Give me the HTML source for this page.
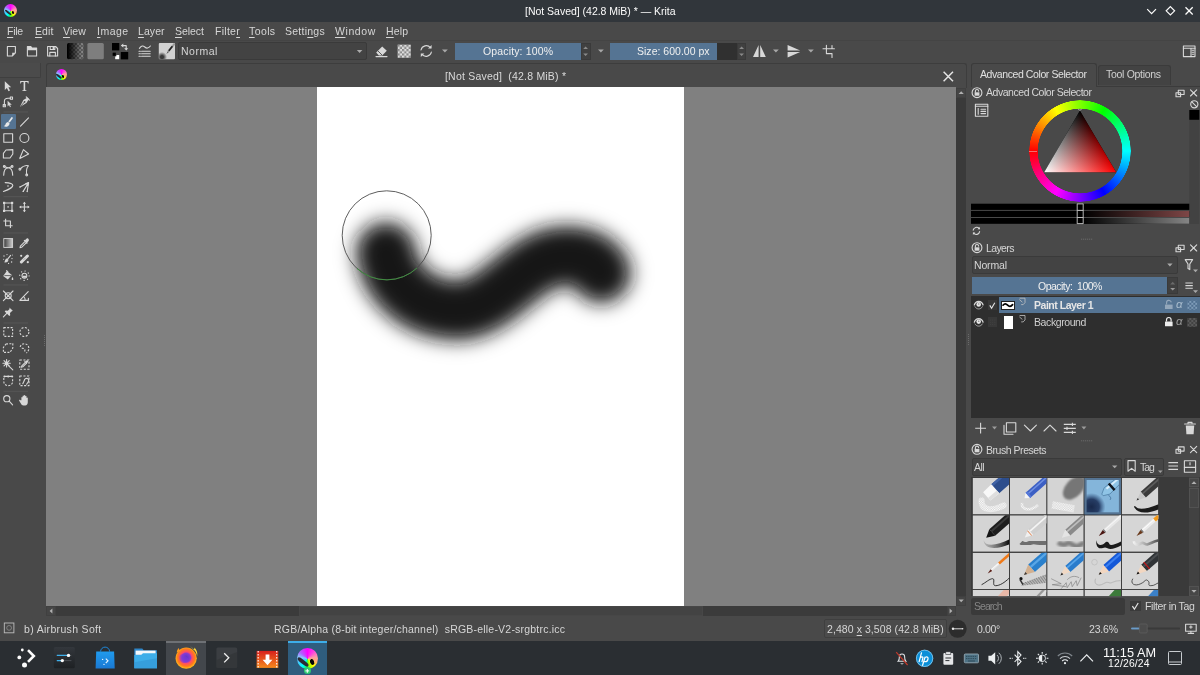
<!DOCTYPE html>
<html><head><meta charset="utf-8"><title>Krita</title>
<style>
*{box-sizing:border-box;margin:0;padding:0}
html,body{width:1200px;height:675px;overflow:hidden;background:#494949;font-family:"Liberation Sans",sans-serif;font-size:10.5px;color:#d6d6d6}
.a{position:absolute}
.t{position:absolute;white-space:pre;line-height:1;will-change:transform}
svg{position:absolute;overflow:visible}
.ic{stroke:#d8d8d8;fill:none;stroke-width:1.1;stroke-linecap:round;stroke-linejoin:round}
.fi{fill:#d8d8d8;stroke:none}
.bt{stroke-linecap:butt}
.kr{border-radius:50%;overflow:hidden;background:conic-gradient(from 0deg,#f0f 0deg,#ff40e0 40deg,#ff9aa8 80deg,#ffb070 110deg,#ff0 140deg,#8f0 170deg,#0f8 190deg,#0ff 215deg,#4cc4ff 250deg,#8ac8ff 280deg,#b060ff 310deg,#f0f 360deg)}
.kr i{position:absolute;left:8%;top:40%;width:62%;height:17%;background:#2b2b33;transform:rotate(38deg);transform-origin:0 50%;border-radius:40%}
.kr b{position:absolute;left:62%;top:52%;width:18%;height:26%;background:#050505;border-radius:50%;transform:rotate(-20deg)}
u{text-decoration:underline;text-underline-offset:1.5px;text-decoration-thickness:1px}
</style></head><body>
<!-- ===== title bar ===== -->
<div class="a" style="left:0;top:0;width:1200px;height:22px;background:#31363b"></div>
<span class="t" style="left:524.7px;top:5.81px;font-size:10.5px;letter-spacing:-0.017px;color:#fcfcfc;">[Not Saved] (42.8 MiB) * — Krita</span>
<!--TITLEICONS-->
<!-- ===== menubar ===== -->
<span class="t" style="left:7.3px;top:26.11px;font-size:10.5px;letter-spacing:-0.246px;color:#d6d6d6;"><u>F</u>ile</span><span class="t" style="left:34.5px;top:26.11px;font-size:10.5px;letter-spacing:0.064px;color:#d6d6d6;"><u>E</u>dit</span><span class="t" style="left:62.9px;top:26.11px;font-size:10.5px;letter-spacing:0.102px;color:#d6d6d6;"><u>V</u>iew</span><span class="t" style="left:96.8px;top:26.11px;font-size:10.5px;letter-spacing:0.503px;color:#d6d6d6;"><u>I</u>mage</span><span class="t" style="left:138.4px;top:26.11px;font-size:10.5px;letter-spacing:0.080px;color:#d6d6d6;"><u>L</u>ayer</span><span class="t" style="left:175.0px;top:26.11px;font-size:10.5px;letter-spacing:-0.061px;color:#d6d6d6;"><u>S</u>elect</span><span class="t" style="left:214.7px;top:26.11px;font-size:10.5px;letter-spacing:0.271px;color:#d6d6d6;">Filte<u>r</u></span><span class="t" style="left:249.1px;top:26.11px;font-size:10.5px;letter-spacing:0.396px;color:#d6d6d6;"><u>T</u>ools</span><span class="t" style="left:285.3px;top:26.11px;font-size:10.5px;letter-spacing:0.250px;color:#d6d6d6;">Setti<u>n</u>gs</span><span class="t" style="left:335.3px;top:26.11px;font-size:10.5px;letter-spacing:0.588px;color:#d6d6d6;"><u>W</u>indow</span><span class="t" style="left:386.0px;top:26.11px;font-size:10.5px;letter-spacing:0.130px;color:#d6d6d6;"><u>H</u>elp</span>
<!-- ===== toolbar ===== -->
<div class="a" style="left:178px;top:42px;width:189px;height:18px;background:#434343;border:1px solid #3a3a3a;border-radius:2px"></div>
<span class="t" style="left:181.0px;top:46.11px;font-size:10.5px;letter-spacing:0.491px;color:#d6d6d6;">Normal</span>
<div class="a" style="left:454.5px;top:42.5px;width:126px;height:17.5px;background:#557493"></div>
<div class="a" style="left:580.5px;top:42.5px;width:10px;height:17.5px;background:#404040;border:1px solid #3a3a3a"></div>
<span class="t" style="left:482.5px;top:46.11px;font-size:10.5px;letter-spacing:0.142px;color:#f0f0f0;">Opacity: 100%</span>
<div class="a" style="left:609.5px;top:42.5px;width:107px;height:17.5px;background:#557493"></div>
<div class="a" style="left:716.5px;top:42.5px;width:20.5px;height:17.5px;background:#303030"></div>
<div class="a" style="left:737px;top:42.5px;width:9px;height:17.5px;background:#404040;border:1px solid #3a3a3a"></div>
<span class="t" style="left:636.8px;top:46.11px;font-size:10.5px;letter-spacing:0.015px;color:#f0f0f0;">Size: 600.00 px</span>
<!--TB-START-->
<svg width="1200" height="22" style="left:0;top:41px" viewBox="0 41 1200 22">
<defs>
 <pattern id="chk" width="4" height="4" patternUnits="userSpaceOnUse" x="67" y="43"><rect width="4" height="4" fill="#8c8c8c"/><rect width="2" height="2" fill="#626262"/><rect x="2" y="2" width="2" height="2" fill="#626262"/></pattern>
 <linearGradient id="gsw" x1="67" x2="83.3" y1="0" y2="0" gradientUnits="userSpaceOnUse"><stop offset="0.05" stop-color="#000"/><stop offset="1" stop-color="#000" stop-opacity="0"/></linearGradient>
 <radialGradient id="blob" cx="162" cy="57" r="5" gradientUnits="userSpaceOnUse"><stop offset="0.3" stop-color="#3a3a3a"/><stop offset="1" stop-color="#3a3a3a" stop-opacity="0"/></radialGradient>
 <pattern id="chk2" width="4.4" height="4.4" patternUnits="userSpaceOnUse" x="397.6" y="44.6"><rect width="4.4" height="4.4" fill="#e0e0e0"/><rect width="2.2" height="2.2" fill="#8a8a8a"/><rect x="2.2" y="2.2" width="2.2" height="2.2" fill="#8a8a8a"/></pattern>
</defs>
<!-- new -->
<path d="M7.4 46.5h8v6.3l-3.2 3.2h-4.8z" class="ic" stroke-width="1"/><path d="M15.4 52.8h-3.2v3.2z" class="fi"/>
<!-- open -->
<path d="M27.4 56v-9.5h3.4l1.2 1.6h4.6v7.9z" class="ic" stroke-width="1"/><path d="M27.4 46.5h3.4l1.2 1.6h4.6v2.2h-9.2z" class="fi"/>
<!-- save -->
<path d="M47.6 46.5h8l2 2v7.5h-10z" class="ic" stroke-width="1"/><path d="M50.2 46.5v3h4.6v-3M49.8 56v-3.6h5.6v3.6" class="ic" stroke-width="0.9"/><rect x="52.6" y="47" width="1.4" height="2" class="fi"/>
<!-- gradient swatch -->
<rect x="67" y="43" width="16.3" height="16.2" rx="1.5" fill="url(#chk)"/><rect x="67" y="43" width="16.3" height="16.2" rx="1.5" fill="url(#gsw)"/>
<!-- pattern swatch -->
<rect x="87.4" y="43" width="16.4" height="16.3" rx="1.5" fill="#7e7e7e"/>
<!-- fg bg -->
<rect x="112" y="43" width="7.3" height="7.4" fill="#000"/><rect x="120.8" y="52" width="7.4" height="7.4" fill="#000"/>
<rect x="115.2" y="55" width="4" height="4.2" fill="#fff"/><rect x="112.2" y="52.2" width="3.9" height="3.9" fill="#000" stroke="#555" stroke-width="0.5"/>
<path d="M122 45.6h4.2v3.2" class="ic" stroke-width="1.2"/><path d="M120.9 45.6l2.4-2v4z M126.2 50.4l-2-2.2h4z" class="fi"/>
<!-- brush editor -->
<path d="M139.4 48.4c2-3 3.6-3 5.4-1.4s3.6 1.6 5.6-1" class="ic" stroke-width="1.3"/>
<path d="M141.6 51.2h8.6M141.6 53.7h8.6M141.6 56.2h8.6" class="ic" stroke-width="1.2" stroke-linecap="butt"/><path d="M139 51.2h1.4M139 53.7h1.4M139 56.2h1.4" class="ic" stroke-width="1.2" stroke-linecap="butt"/>
<!-- brush preset -->
<rect x="158.8" y="43" width="16.2" height="16.3" rx="1" fill="#d2d2d2"/><rect x="158.8" y="43" width="16.2" height="16.3" rx="1" fill="url(#blob)"/>
<path d="M174.6 43.6l-6.8 8.6" stroke="#9a9a9a" stroke-width="2" /><path d="M172.4 46.2l-3.6 4.6" stroke="#222" stroke-width="1.6"/><path d="M168.2 51.8l-1.2 1.6" stroke="#555" stroke-width="1"/>
<!-- combo arrow -->
<path d="M356.8 50l2.8 3 2.8-3z" fill="#aaa"/>
<!-- eraser -->
<path d="M376.2 52.6l6-6.2 4.6 4.4-4.6 4.8h-3.4z" class="fi"/><path d="M376 56.6h11" class="ic" stroke-width="1"/><path d="M378 51l4 4" stroke="#494949" stroke-width="0.9"/>
<!-- alpha checker -->
<rect x="397.6" y="44.6" width="13.2" height="13.2" fill="url(#chk2)"/>
<!-- reload -->
<path d="M421 50a5.4 5.4 0 0 1 9.4-2.4M431.4 52a5.4 5.4 0 0 1-9.4 2.4" class="ic" stroke-width="1.2"/><path d="M431.6 45v3.6h-3.6z M420.8 57v-3.6h3.6z" class="fi"/>
<!-- dropdown arrows -->
<path d="M442 49.6l2.9 3 2.9-3z M598 49.6l2.9 3 2.9-3z M773 49.6l2.9 3 2.9-3z M808 49.6l2.9 3 2.9-3z" fill="#a8a8a8"/>
<!-- spin arrows -->
<path d="M583.2 49l2.4-2.6 2.4 2.6z M583.2 53.4l2.4 2.6 2.4-2.6z" fill="#8a8a8a"/>
<path d="M739.2 49l2.4-2.6 2.4 2.6z M739.2 53.4l2.4 2.6 2.4-2.6z" fill="#8a8a8a"/>
<!-- mirror h -->
<path d="M758.6 45v12h-5.6z M760.2 45v12h5.6z" class="fi"/>
<!-- mirror v -->
<path d="M787.6 50.4h12.6l-12.6-5.4z M787.6 52h12.6l-12.6 5.4z" class="fi"/>
<!-- wrap -->
<path d="M823 48.8h11.4M826.4 45.4v8.2h5.6v3.8M832 45.6v3" class="ic" stroke-width="1.2" stroke-linecap="butt"/>
<!-- right sidebar icon -->
<rect x="1183.4" y="46" width="11.6" height="10.6" class="ic" stroke-width="1"/><path d="M1183.4 48.2h11.6M1191 48.2v8.4" class="ic" stroke-width="1"/><path d="M1192.2 50.2h1.6M1192.2 52.2h1.6M1192.2 54.2h1.6" class="ic" stroke-width="0.7"/>
</svg>
<!--TB-END-->
<!-- ===== toolbox ===== -->
<div class="a" style="left:0;top:63px;width:41px;height:14.5px;background:#4b4b4b;border-right:1px solid #3f3f3f;border-bottom:1px solid #3f3f3f;border-radius:0 0 2px 0"></div>
<!--TX-START-->
<div class="a" style="left:1px;top:114.4px;width:14.8px;height:14.6px;background:#557493;border-radius:1px"></div>
<svg width="46" height="350" style="left:0;top:63px" viewBox="0 63 46 350">
<g stroke="#5a5a5a" stroke-width="0.8"><path d="M3.5 112h24.5M3.5 196.7h24.5M3.5 233h24.5M3.5 285h24.5M3.5 323h24.5M3.5 391.3h24.5"/></g>
<!-- r1 arrow, T -->
<path d="M4.8 81.3v8.6l2.1-2 1.6 3.4 1.5-.7-1.6-3.3h2.8z" class="fi"/>
<path d="M20.2 81v2.4h.7c.2-1.1.6-1.4 1.6-1.4h1.1v7.6c0 .7-.3.9-1.3.9v.6h4.2v-.6c-1 0-1.3-.2-1.3-.9v-7.6h1.1c1 0 1.4.3 1.6 1.4h.7v-2.400z" class="fi"/>
<!-- r2 edit shapes, calligraphy -->
<path d="M4.4 105.2v-4c0-2 1.600-3 3.600-3h2.400" class="ic" stroke-width="1"/><rect x="3.2" y="104.600" width="2.200" height="2.200" class="ic" stroke-width="0.7" fill="#494949"/><rect x="10.300" y="97" width="2.200" height="2.200" class="ic" stroke-width="0.7" fill="#494949"/>
<path d="M7.600 100.800v5.600l1.400-1.300 1 2.100.9-.4-1-2.100h1.900z" class="fi"/>
<path d="M27.600 97.400l1.300 1.500-2.400 4.200-5 3-1.200.600.4-1.400 2.700-5.200z" class="fi"/><path d="M20.800 106.200l3.600-4.200" stroke="#494949" stroke-width="0.8"/><circle cx="24.600" cy="101.800" r="0.900" fill="#494949"/><path d="M26.200 96.800l3.200 3.400" class="ic" stroke-width="1"/>
<!-- r3 brush, line -->
<path d="M12.300 117.200c.5.300.7.800.4 1.200l-3 4.200-1.400-1.100 3-4.100c.3-.4.700-.5 1-.2z" fill="#e8e8e8"/>
<path d="M8 121.900l1.500 1.200c.2 1.800-.8 3.200-2.500 3.600-1.200.300-2.300.100-3.300-.600 1.200-.200 1.600-.900 1.900-2 .3-1.300 1.200-2.100 2.400-2.200z" fill="#e8e8e8"/>
<path d="M20.500 126.200l8-8.400" class="ic" stroke-width="1.200"/>
<!-- r4 rect, ellipse -->
<rect x="3.800" y="133.700" width="8.800" height="8.600" class="ic" stroke-width="1"/>
<circle cx="24.400" cy="138" r="4.500" class="ic" stroke-width="1"/>
<!-- r5 polygon, polyline -->
<path d="M6 150l6.800-.4v4.400l-2.800 4h-6.600v-4.700z" class="ic" stroke-width="1"/>
<path d="M19.800 158.200l3.600-8.600 5.200 4.400-8.800 4.600" class="ic" stroke-width="1"/>
<!-- r6 bezier, freehand path -->
<path d="M3.700 175.200c.2-4.600 2-7.400 4.500-7.400s4.300 2.800 4.500 7.400" class="ic" stroke-width="1"/><path d="M5 166.800l2.600 1M11.400 166.800l-2.600 1" class="ic" stroke-width="0.800"/><circle cx="4.300" cy="166.500" r="0.900" class="ic" stroke-width="0.700"/><circle cx="12.100" cy="166.500" r="0.900" class="ic" stroke-width="0.700"/>
<path d="M20.600 168.600c1.600-2 5-3.600 7.800-2.800M28.400 165.800c-1.800 1.600-2.200 4.800-1.800 8.600" class="ic" stroke-width="1"/><circle cx="19.900" cy="169.200" r="0.900" class="ic" stroke-width="0.700"/><circle cx="26.700" cy="175" r="0.900" class="ic" stroke-width="0.700"/>
<!-- r7 dyna, multibrush -->
<path d="M5.200 182.600c3.600.200 7.400 1 7.600 2.600.200 2-5 4.800-9.400 6.200" class="ic" stroke-width="1.100"/><circle cx="8" cy="186" r="0.800" class="fi"/>
<path d="M20 187l8.600-4.400M23.200 191.400l5.400-8.800M27.200 191.400l1.400-8.800" class="ic" stroke-width="1"/><path d="M29 182.200l-4.200 1 3.600 2.600z" class="fi"/><circle cx="20" cy="187" r="0.700" class="fi"/><circle cx="23.200" cy="191.400" r="0.700" class="fi"/><circle cx="27.200" cy="191.600" r="0.700" class="fi"/>
<!-- r8 transform, move -->
<rect x="4.200" y="203" width="7.800" height="7.800" class="ic" stroke-width="1"/><g class="fi"><rect x="3" y="201.800" width="2.200" height="2.200"/><rect x="11" y="201.800" width="2.200" height="2.200"/><rect x="3" y="209.800" width="2.200" height="2.200"/><rect x="11" y="209.800" width="2.200" height="2.200"/><rect x="7.400" y="206.200" width="1.400" height="1.400"/></g>
<path d="M24.400 202.800v8.400M20.200 207h8.400" class="ic" stroke-width="1.100"/><path d="M24.400 201.800l1.600 2h-3.200z M24.400 212.200l1.600-2h-3.200z M19.200 207l2-1.600v3.200z M29.600 207l-2-1.600v3.200z" class="fi"/>
<!-- r9 crop -->
<path d="M5.600 218.800v7h7M3.400 221h7v7" class="ic" stroke-width="1.200" style="stroke-linecap:butt"/>
<!-- r10 gradient, picker -->
<defs><linearGradient id="tgd" x1="3.800" x2="12.600" y1="0" y2="0" gradientUnits="userSpaceOnUse"><stop offset="0" stop-color="#3a3a3a"/><stop offset="1" stop-color="#d0d0d0"/></linearGradient></defs>
<rect x="3.800" y="238.600" width="8.800" height="8.800" fill="url(#tgd)" stroke="#d8d8d8" stroke-width="0.900"/>
<path d="M28.300 238.700c.9.900.8 2-.1 2.900l-.9.900.5.500-.9.900-3.300-3.300.9-.9.500.5.900-.9c.9-.9 1.600-1.300 2.400-.6z" class="fi"/><path d="M24.600 241.800l-4.200 4.300-.4 1.600 1.600-.4 4.300-4.200" class="ic" stroke-width="0.900"/>
<!-- r11 colorize, smart patch -->
<path d="M10.600 255.400l-2.600 3.200M7.600 259.200c.700 1.200-.3 2.800-2.600 2.800.7-.6.400-1.300.8-2 .4-.8 1.200-1 1.800-.8z" class="ic" stroke-width="1" /><path d="M7.400 259c.900 1.300-.200 3.100-2.700 3.100.8-.700.500-1.400.900-2.200.4-.8 1.200-1.100 1.800-.9z" class="fi"/><g class="fi"><circle cx="4" cy="256" r="0.700"/><circle cx="7" cy="254.600" r="0.600"/><circle cx="12" cy="258.600" r="0.700"/><circle cx="11.600" cy="262" r="0.700"/><circle cx="8.600" cy="263.400" r="0.600"/><circle cx="3.600" cy="259.200" r="0.500"/><circle cx="12.400" cy="255" r="0.500"/></g>
<path d="M21.400 262l6-6" stroke="#d8d8d8" stroke-width="3" stroke-linecap="round"/><g class="fi"><circle cx="21.200" cy="255.800" r="1.100"/><circle cx="27.800" cy="262.200" r="1.100"/></g><path d="M23.600 259.800l1.600-1.600" stroke="#494949" stroke-width="0.700" stroke-dasharray="0.6 0.6"/>
<!-- r12 fill, enclose -->
<path d="M6.800 271l5 4-4 4.600-4.600-3.600z" class="fi"/><path d="M4.400 275.600h6.600" stroke="#494949" stroke-width="0.800"/><path d="M12.400 277c.8 1.200 1 1.800.9 2.400-.2.800-1.400.8-1.600 0-.1-.6.100-1.200.7-2.400z" class="fi"/><path d="M6.600 270.600l1.200 1" class="ic" stroke-width="0.900"/>
<circle cx="24.400" cy="275.700" r="4.700" class="ic" stroke-width="1.300" stroke-dasharray="0.300 3.390"/><circle cx="24.400" cy="275.700" r="2.400" class="ic" stroke-width="0.900"/><path d="M22.800 275.700h3.200v1.400c0 .8-3.200.8-3.200 0z" class="fi"/>
<!-- r13 assistant, measure -->
<path d="M3.400 291l9.600 9.600M13 291l-9.600 9.600" class="ic" stroke-width="1"/><circle cx="8.200" cy="295.800" r="3" class="ic" stroke-width="0.900"/><circle cx="8.200" cy="295.800" r="0.900" class="fi" opacity="0.600"/>
<path d="M28.200 291.600l-8.400 8.800h8.600v-2.200" class="ic" stroke-width="1.100"/><path d="M23.600 296.600c1 .8 1.600 2 1.600 3.600" class="ic" stroke-width="0.900"/>
<!-- r14 pin -->
<path d="M9.400 307.400l3.400 3.400-1 .4-1.800 1.800.2 2.200-.9.900-4.600-4.600.9-.9 2.200.2 1.800-1.800z" class="fi"/><path d="M6.800 313.400l-3.400 3.400" class="ic" stroke-width="0.900"/>
<!-- r15 rect sel, ellipse sel -->
<rect x="3.800" y="327.600" width="8.800" height="8.800" class="ic bt" stroke-width="1.150" stroke-dasharray="2 1.400"/>
<circle cx="24.400" cy="332" r="4.500" class="ic bt" stroke-width="1.150" stroke-dasharray="2 1.530"/>
<!-- r16 polygon sel, freehand sel -->
<path d="M6 344l6.800-.4v4.400l-2.800 4.400h-6.600v-5z" class="ic bt" stroke-width="1.150" stroke-dasharray="2 1.400"/>
<path d="M20.200 347c.4-2.200 2.400-3.400 4.400-3.200 2.600.2 4.400 2.200 4.200 5-.1 1.800-.9 3-2.400 4.200M21.800 348.400c1.400-.4 2.600 0 3 1.200.3 1.200-.2 2.200-.8 3" class="ic bt" stroke-width="1.150" stroke-dasharray="2 1.400"/>
<!-- r17 magic wand, similar -->
<path d="M8.200 365.400l4.600 4.400" class="ic" stroke-width="1.200"/><path d="M6.600 359.600v7.400M2.900 363.300h7.400M4 360.700l5.200 5.200M9.200 360.700l-5.200 5.200" class="ic" stroke-width="1"/><circle cx="6.600" cy="363.300" r="1.500" class="fi"/>
<rect x="19.800" y="360" width="9.200" height="9.200" class="ic bt" stroke-width="1.150" stroke-dasharray="2.100 1.500"/><path d="M27.600 360.400c.7.700.6 1.500-.1 2.200l-.6.600.4.400-.7.700-2.500-2.500.7-.7.400.4.600-.6c.7-.7 1.200-1 1.800-.500z" class="fi"/><path d="M24.800 362.800l-3 3-.3 1.300 1.300-.3 3-3" class="ic" stroke-width="0.800"/>
<!-- r18 bezier sel, magnetic sel -->
<path d="M3.800 378v3.600c0 2.400 2 4 4.400 4s4.400-1.600 4.400-4v-3.600" class="ic bt" stroke-width="1.150" stroke-dasharray="2 1.400"/><path d="M4.800 376.400h7" class="ic" stroke-width="1"/><circle cx="4.400" cy="376.400" r="1" class="fi"/><circle cx="12.200" cy="376.400" r="1" class="fi"/><circle cx="8.200" cy="376.400" r="1" class="fi"/>
<rect x="19.800" y="376" width="9.200" height="9.600" class="ic bt" stroke-width="1.150" stroke-dasharray="2.100 1.500"/><path d="M22.800 383.800l1.500-3.300a2.200 2.200 0 1 1 3.700 1.700l-1.400 2" class="ic" stroke-width="1.500"/>
<!-- r19 zoom, pan -->
<circle cx="6.800" cy="398.700" r="3.100" class="ic" stroke-width="1.200"/><path d="M9.200 401.200l3.400 3.600" class="ic" stroke-width="1.500"/>
<path d="M21.400 400.200v-2.600c0-.9 1.200-.9 1.200 0v-1.400c0-.9 1.300-.9 1.300 0v-.6c0-.9 1.300-.9 1.300 0v.8c0-.9 1.300-.9 1.300 0v1.600c0-.8 1.300-.8 1.300 0v4.200c0 1.800-1 3.200-2.600 3.200h-1.800c-1.200 0-1.800-.6-2.400-1.600l-1.800-3c-.4-.8.600-1.400 1.200-.6z" class="fi"/>
</svg>
<!-- toolbox splitter dots -->
<div class="a" style="left:44px;top:335px;width:1px;height:11px;background:repeating-linear-gradient(#6a6a6a 0 1px,transparent 1px 2px)"></div>
<div class="a" style="left:968px;top:334px;width:1px;height:11px;background:repeating-linear-gradient(#6a6a6a 0 1px,transparent 1px 2px)"></div>
<!--TX-END-->
<!-- ===== document tab + canvas ===== -->
<div class="a" style="left:46px;top:63px;width:920.5px;height:25px;background:#494949;border:1px solid #3d3d3d;border-bottom:none;border-radius:3px 3px 0 0"></div>
<span class="t" style="left:445.3px;top:70.91px;font-size:10.5px;letter-spacing:0.202px;color:#dadada;">[Not Saved]  (42.8 MiB) *</span>
<div class="a" style="left:46px;top:87px;width:909.5px;height:518.5px;background:#808080;overflow:hidden"></div>
<div class="a" style="left:317px;top:87px;width:367.2px;height:518.5px;background:#fff"></div>
<svg width="910" height="519" style="left:46px;top:87px" viewBox="46 87 910 519">
<defs><filter id="bl" filterUnits="userSpaceOnUse" x="300" y="150" width="400" height="260"><feGaussianBlur stdDeviation="7"/><feGaussianBlur stdDeviation="7"/></filter></defs>
<path d="M386 252 C389 280 412 306 451 310 C495 314 518 264 556 257 C580 253 597 262 601 273" fill="none" stroke="#141414" stroke-width="60" stroke-linecap="round" stroke-linejoin="round" filter="url(#bl)"/>
<circle cx="386.7" cy="235.3" r="44.5" fill="none" stroke="#4c4c4c" stroke-width="0.9"/>
<path d="M357 268.5A44.5 44.5 0 0 0 417 268" fill="none" stroke="#3f8f3f" stroke-width="1"/>
</svg>
<!-- scrollbars -->
<div class="a" style="left:956px;top:87.5px;width:10.3px;height:518px;background:#3a3a3a"></div>
<div class="a" style="left:956px;top:87.5px;width:10.3px;height:10px;background:#454545;border:1px solid #404040"></div>
<div class="a" style="left:956px;top:596px;width:10.3px;height:9.5px;background:#454545;border:1px solid #404040"></div>
<div class="a" style="left:46px;top:606px;width:909.5px;height:10px;background:#3b3b3b"></div>
<div class="a" style="left:299px;top:606px;width:403.5px;height:10px;background:#434343;border:1px solid #474747"></div>
<div class="a" style="left:46px;top:606px;width:10px;height:10px;background:#454545;border:1px solid #404040"></div>
<div class="a" style="left:946.5px;top:606px;width:9px;height:10px;background:#454545;border:1px solid #404040"></div>
<!--SCROLLARROWS-->
<!-- ===== dock ===== -->
<!--DOCK-START-->
<!-- dock tabs -->
<div class="a" style="left:971px;top:63.2px;width:125.8px;height:23.8px;background:#494949;border:1px solid #3b3b3b;border-bottom:none;border-radius:3px 3px 0 0"></div>
<div class="a" style="left:1097.5px;top:64.8px;width:73px;height:20.5px;background:#434343;border:1px solid #3b3b3b;border-bottom:none;border-radius:3px 3px 0 0"></div>
<div class="a" style="left:1096.8px;top:85.6px;width:103.2px;height:1px;background:#3b3b3b"></div>
<span class="t" style="left:980.0px;top:69.31px;font-size:10.5px;letter-spacing:-0.416px;color:#e0e0e0;">Advanced Color Selector</span>
<span class="t" style="left:1106.4px;top:69.31px;font-size:10.5px;letter-spacing:-0.298px;color:#d0d0d0;">Tool Options</span>
<span class="t" style="left:986.0px;top:87.11px;font-size:10.5px;letter-spacing:-0.462px;color:#d6d6d6;">Advanced Color Selector</span>
<!-- lock icons / float / close for three dockers -->
<svg width="232" height="400" style="left:968px;top:63px" viewBox="968 63 232 400">
 <g id="hdr1">
  <circle cx="977" cy="92.7" r="4.9" class="ic" stroke-width="0.9"/>
  <rect x="974.6" y="92.3" width="4.8" height="3.4" class="fi"/>
  <path d="M975.4 92.3v-1.2a1.6 1.6 0 0 1 3.2 0" class="ic" stroke-width="0.8"/>
  <path d="M1178.3 90.3h5.8v4.2h-5.8z M1176 92.8h4.6v3.9h-4.6z" class="ic" stroke-width="0.9" fill="#494949"/>
  <path d="M1190.5 89.8l6.2 6.2 M1196.7 89.8l-6.2 6.2" class="ic" stroke-width="1"/>
 </g>
 <use href="#hdr1" y="155"/>
 <use href="#hdr1" y="356.6"/>
 <!-- config icon -->
 <rect x="975.4" y="104.2" width="12.4" height="12" class="ic" stroke-width="1"/>
 <path d="M975.4 106.3h12.4" class="ic" stroke-width="1.4"/>
 <path d="M978.2 108.6v5.6" class="ic" stroke-width="1.6" stroke-linecap="butt"/>
 <path d="M981 109.2h4.6M981 111.4h4.6M981 113.6h4.6" class="ic" stroke-width="0.9"/>
 <!-- no icon + black square -->
 <circle cx="1194.3" cy="104.3" r="3.6" class="ic" stroke-width="0.9"/><path d="M1191.8 101.8l5 5" class="ic" stroke-width="0.9"/>
 <rect x="1189.3" y="120" width="10" height="104" fill="#424242"/>
 <rect x="1189.3" y="110" width="10" height="9.8" fill="#000"/>
 <!-- triangle -->
 <defs>
  <linearGradient id="tgr" x1="0" y1="110.7" x2="0" y2="172.3" gradientUnits="userSpaceOnUse"><stop offset="0" stop-color="#000"/><stop offset="1" stop-color="#f00"/></linearGradient><linearGradient id="tgc" x1="1044.2" y1="172.3" x2="1097.64" y2="140.81" gradientUnits="userSpaceOnUse"><stop offset="0" stop-color="#0ff"/><stop offset="1" stop-color="#000"/></linearGradient>
  <linearGradient id="tg1" x1="1044.2" y1="172.3" x2="1116.2" y2="172.3" gradientUnits="userSpaceOnUse"><stop offset="0" stop-color="#fff"/><stop offset="1" stop-color="#f00"/></linearGradient>
  <linearGradient id="tg2" x1="1080" y1="110.7" x2="1080" y2="172.3" gradientUnits="userSpaceOnUse"><stop offset="0" stop-color="#000" stop-opacity="1"/><stop offset="1" stop-color="#000" stop-opacity="0"/></linearGradient>
  <linearGradient id="bg2" x1="1083" y1="0" x2="1189.3" y2="0" gradientUnits="userSpaceOnUse"><stop offset="0" stop-color="#000"/><stop offset="1" stop-color="#7e4646"/></linearGradient>
  <linearGradient id="bg3" x1="1083" y1="0" x2="1189.3" y2="0" gradientUnits="userSpaceOnUse"><stop offset="0" stop-color="#000"/><stop offset="1" stop-color="#858585"/></linearGradient>
 </defs>
 <g style="isolation:isolate"><path d="M1079.9 110.7L1116.2 172.3H1044.2z" fill="url(#tgr)"/><path d="M1079.9 110.7L1116.2 172.3H1044.2z" fill="url(#tgc)" style="mix-blend-mode:screen"/></g>
 <circle cx="1079.9" cy="108.6" r="1.6" fill="none" stroke="#ddd" stroke-width="0.6"/>
 <!-- bars -->
 <rect x="971" y="203.7" width="218.3" height="6.2" fill="#000"/>
 <rect x="971" y="210.9" width="218.3" height="6.1" fill="#000"/>
 <rect x="971" y="218" width="218.3" height="5.8" fill="#000"/>
 <rect x="1083" y="210.9" width="106.3" height="6.1" fill="url(#bg2)"/>
 <rect x="1083" y="218" width="106.3" height="5.8" fill="url(#bg3)"/>
 <path d="M1077.2 203.7v20.1M1083.2 203.7v20.1M1077.2 210.4h6M1077.2 217.5h6M1077.2 203.9h6M1077.2 223.6h6" stroke="#c8c8c8" stroke-width="0.9" fill="none"/>
 <!-- reload small -->
 <path d="M973.2 230.2a3.4 3.4 0 0 1 6-1.6M979.6 231.6a3.4 3.4 0 0 1-6 1.6" class="ic" stroke-width="1"/>
 <path d="M979.9 226.9v2.4h-2.4z M972.9 234.9v-2.4h2.4z" class="fi"/>
 <!-- splitter dots -->
 <path d="M1081 239.2h11.5M1081 440.8h11.5" stroke="#6a6a6a" stroke-width="1" stroke-dasharray="1.2 0.8"/>
</svg>
<div class="a" style="left:1028.7px;top:100.4px;width:102px;height:102px;border-radius:50%;background:conic-gradient(from 270deg,#f00,#ff0 60deg,#0f0 120deg,#0ff 180deg,#00f 240deg,#f0f 300deg,#f00 360deg);-webkit-mask:radial-gradient(circle closest-side,transparent 0,transparent 82.4%,#000 83.5%,#000 99%,transparent 100%);mask:radial-gradient(circle closest-side,transparent 0,transparent 82.4%,#000 83.5%,#000 99%,transparent 100%)"></div>
<div class="a" style="left:1028.7px;top:150.6px;width:8.8px;height:1.6px;background:#e88;opacity:.8"></div>
<!-- Layers docker -->
<span class="t" style="left:985.6px;top:242.71px;font-size:10.5px;letter-spacing:-0.623px;color:#d6d6d6;">Layers</span>
<div class="a" style="left:972px;top:256px;width:206px;height:18px;background:#434343;border:1px solid #3a3a3a;border-radius:2px"></div>
<span class="t" style="left:974.4px;top:260.11px;font-size:10.5px;letter-spacing:-0.169px;color:#d6d6d6;">Normal</span>
<div class="a" style="left:972px;top:277px;width:195.4px;height:17.4px;background:#557493"></div>
<div class="a" style="left:1167.4px;top:277px;width:10.4px;height:17.4px;background:#404040;border:1px solid #3a3a3a"></div>
<span class="t" style="left:1037.6px;top:280.71px;font-size:10.5px;letter-spacing:-0.523px;color:#f0f0f0;">Opacity:  100%</span>
<div class="a" style="left:971px;top:296px;width:228.5px;height:122.4px;background:#2e2e2e"></div>
<div class="a" style="left:999px;top:296.8px;width:200.5px;height:16.6px;background:#557493"></div>
<div class="a" style="left:988px;top:300.2px;width:9.2px;height:9.4px;background:#383838"></div>
<div class="a" style="left:988px;top:317.4px;width:9.2px;height:9.4px;background:#383838"></div>
<div class="a" style="left:1001px;top:301.4px;width:14.2px;height:8.4px;background:#fff;border:1px solid #222"></div>
<div class="a" style="left:1003.6px;top:316px;width:9.6px;height:13px;background:#fff"></div>
<span class="t" style="left:1034.0px;top:299.51px;font-size:10.5px;letter-spacing:-0.481px;color:#e6e6e6;font-weight:bold;">Paint Layer 1</span>
<span class="t" style="left:1034.0px;top:316.71px;font-size:10.5px;letter-spacing:-0.405px;color:#cfcfcf;">Background</span>
<!--LAYERALPHA--><span class="t" style="left:1176.3px;top:298.87px;font-size:11.5px;letter-spacing:0.938px;color:#a9bccd;font-style:italic;">α</span><span class="t" style="left:1176.3px;top:316.07px;font-size:11.5px;letter-spacing:0.938px;color:#9a9a9a;font-style:italic;">α</span>
<!-- Brush presets -->
<span class="t" style="left:985.6px;top:444.51px;font-size:10.5px;letter-spacing:-0.463px;color:#d6d6d6;">Brush Presets</span>
<div class="a" style="left:972px;top:458px;width:150.4px;height:17.6px;background:#434343;border:1px solid #3a3a3a;border-radius:2px"></div>
<span class="t" style="left:974.4px;top:462.11px;font-size:10.5px;letter-spacing:-0.536px;color:#d6d6d6;">All</span>
<div class="a" style="left:1124px;top:458px;width:40.4px;height:17.6px;background:#464646;border:1px solid #3a3a3a;border-radius:2px"></div>
<span class="t" style="left:1139.6px;top:462.11px;font-size:10.5px;letter-spacing:-1.069px;color:#d6d6d6;">Tag</span>
<div class="a" style="left:971px;top:477px;width:228.5px;height:119.4px;background:#3a3a3a"></div>
<div class="a" style="left:1188.7px;top:477px;width:10.8px;height:119.4px;background:#424242"></div>
<div class="a" style="left:1189px;top:477.9px;width:10px;height:9.4px;background:#474747;border:1px solid #525252"></div>
<div class="a" style="left:1189px;top:488.3px;width:10px;height:19.6px;background:#454545;border:1px solid #525252"></div>
<div class="a" style="left:1189px;top:586.4px;width:10px;height:9.8px;background:#474747;border:1px solid #525252"></div>
<!--BR-START-->
<svg width="232" height="125" style="left:968px;top:474px" viewBox="968 474 232 125"><defs><pattern id="ckp" width="2.4" height="2.4" patternUnits="userSpaceOnUse"><rect width="1.2" height="1.2" fill="#fff"/><rect x="1.2" y="1.2" width="1.2" height="1.2" fill="#fff"/></pattern><filter id="b1"><feGaussianBlur stdDeviation="1"/></filter><filter id="b05"><feGaussianBlur stdDeviation="0.6"/></filter><radialGradient id="ab"><stop offset="0" stop-color="#18284a"/><stop offset=".55" stop-color="#1c3058" stop-opacity=".9"/><stop offset="1" stop-color="#2a4a7a" stop-opacity="0"/></radialGradient><clipPath id="cp0"><rect width="36.5" height="36.5"/></clipPath><clipPath id="cp1"><rect width="36.5" height="36.5"/></clipPath><clipPath id="cp2"><rect width="36.5" height="36.5"/></clipPath><clipPath id="cp3"><rect width="36.5" height="6.3"/></clipPath></defs><g transform="translate(972.6 477.9)" clip-path="url(#cp0)"><rect width="36.5" height="36.5" fill="#d4d4d4"/><path d="M9 22.500c-1 10 11 11 22 5" fill="none" stroke="url(#ckp)" stroke-width="6" stroke-linecap="round"/><path d="M18.4 6.7 L43.9 -15.7 L51.8 -6.7 L26.3 15.7z" fill="#2c4d8c" /><path d="M18.4 6.7 L43.9 -15.7 L45.5 -13.8 L20.0 8.6z" fill="#3f62a6" /><path d="M10.5 14.4 L18.8 6.4 L26.7 15.4 L17.7 22.6z" fill="#f8f8f8" /><path d="M15.4 20.0 L24.2 12.6 L26.7 15.4 L17.7 22.6z" fill="#dedede" /></g>
<g transform="translate(1010.0 477.9)" clip-path="url(#cp0)"><rect width="36.5" height="36.5" fill="#d4d4d4"/><path d="M12 25c-1 7 8 9 16 2" fill="none" stroke="url(#ckp)" stroke-width="2.600"/><path d="M15.6 14.9 L46.0 -11.9 L50.5 -6.8 L20.1 20.0z" fill="#3c5fc4" /><path d="M16.6 16.0 L47.0 -10.7 L48.0 -9.6 L17.7 17.2z" fill="#6f8fe0" /><path d="M14.5 20.4 L15.6 14.9 L20.1 20.0z" fill="#f4f4f4" /><path d="M15.6 14.9 L17.1 13.6 L21.6 18.7 L20.1 20.0z" fill="#5578d8" /></g>
<g transform="translate(1047.2 477.9)" clip-path="url(#cp0)"><rect width="36.5" height="36.5" fill="#d4d4d4"/><path d="M5 27l22 4" fill="none" stroke="url(#ckp)" stroke-width="7.500" opacity=".9"/><g filter="url(#b1)"><ellipse cx="27" cy="10" rx="8.500" ry="14" transform="rotate(42 27 10)" fill="#767676"/></g></g>
<g transform="translate(1084.5 477.9)" clip-path="url(#cp0)"><rect width="36.5" height="36.5" fill="#84b5da"/><circle cx="7" cy="29" r="14" fill="url(#ab)"/><path d="M17.3 16.2 L19.7 9.9 L34.0 -1.1 L38.0 3.4 L25.3 16.2 L18.7 17.8z" fill="#8fc4e6" stroke="#3d6b94" stroke-width="0.6"/><path d="M22.6 11.6 L35.6 0.7 L34.4 -0.6 L21.3 10.1z" fill="#d8eefc" /><path d="M23.3 6.4 L25.2 4.8 L31.0 11.4 L29.2 13.0z" fill="#10161e" /><path d="M24 17.500c2 1 3 3 1.500 4.500" fill="none" stroke="#3d6b94" stroke-width="0.800"/><rect x="1" y="1" width="34.500" height="34.500" fill="none" stroke="#557493" stroke-width="2.200"/></g>
<g transform="translate(1121.8 477.9)" clip-path="url(#cp0)"><rect width="36.5" height="36.5" fill="#d6d6d6"/><path d="M13 29c3 4 12 3 24-2v3.500c-10 4-20 5-24-1.500z" fill="#1c1c1c" stroke="#1c1c1c" stroke-width="1.500" stroke-linejoin="round"/><path d="M18.9 13.8 L45.9 -10.0 L51.0 -4.3 L24.0 19.5z" fill="#3a3a3a" /><path d="M20.1 15.1 L47.1 -8.7 L48.2 -7.4 L21.2 16.4z" fill="#5c5c5c" /><path d="M14.7 22.6 L18.9 13.8 L24.0 19.5z" fill="#c8c8c8" /><path d="M14.7 22.6 L15.9 20.2 L17.3 21.7z" fill="#303030" /></g>
<g transform="translate(972.6 515.3)" clip-path="url(#cp1)"><rect width="36.5" height="36.5" fill="#d4d4d4"/><defs><linearGradient id="s01" x1="10" x2="36" y1="0" y2="0" gradientUnits="userSpaceOnUse"><stop offset="0" stop-color="#888" stop-opacity=".35"/><stop offset="1" stop-color="#111"/></linearGradient></defs><path d="M11 25c2 7 14 5 26-1v5c-12 5-25 6-26-4z" fill="url(#s01)"/><path d="M16.7 13.9 L44.4 -10.5 L50.3 -3.9 L22.5 20.5z" fill="#1e1e1e" /><path d="M18.0 15.4 L45.8 -9.0 L47.1 -7.5 L19.3 16.9z" fill="#3a3a3a" /><path d="M13.6 22.5 L16.7 13.9 L22.5 20.5z" fill="#141414" /></g>
<g transform="translate(1010.0 515.3)" clip-path="url(#cp1)"><rect width="36.5" height="36.5" fill="#d4d4d4"/><g filter="url(#b05)"><path d="M11 27c4 4 7 1 11 0s8 2 15 0" fill="none" stroke="#555" stroke-width="4.500" opacity=".8"/></g><path d="M18.3 14.0 L46.0 -10.5 L51.1 -4.8 L23.3 19.7z" fill="#cfcfcf" /><path d="M19.4 15.3 L47.2 -9.2 L48.3 -7.9 L20.5 16.5z" fill="#f4f4f4" /><path d="M14.8 22.1 L18.3 14.0 L23.3 19.7z" fill="#f0f0f0" /><path d="M17.2 15.7 L17.8 15.2 L22.0 20.0 L21.4 20.5z" fill="#e0804a" /></g>
<g transform="translate(1047.2 515.3)" clip-path="url(#cp1)"><rect width="36.5" height="36.5" fill="#d4d4d4"/><g filter="url(#b1)"><path d="M11 27c3 3 6 3 9 1s5 3 9 3 5-3 8-3" fill="none" stroke="#666" stroke-width="5" opacity=".75"/></g><path d="M18.1 14.4 L45.8 -10.1 L50.9 -4.4 L23.1 20.1z" fill="#8a8a8a" /><path d="M19.2 15.7 L47.0 -8.8 L48.1 -7.5 L20.3 16.9z" fill="#bdbdbd" /><path d="M14.6 22.5 L18.1 14.4 L23.1 20.1z" fill="#e4e4e4" /></g>
<g transform="translate(1084.5 515.3)" clip-path="url(#cp1)"><rect width="36.5" height="36.5" fill="#d6d6d6"/><path d="M12 25c0 5 5 6 8 3s4-1 5 1 6 0 12-3v4c-6 3-11 5-14 3s-4 0-7 0-5-4-4-8z" fill="#1a1a1a"/><path d="M18.3 14.6 L46.8 -10.5 L49.3 -7.7 L20.8 17.4z" fill="#e8e8e8" /><path d="M18.9 15.2 L47.4 -9.9 L47.9 -9.2 L19.4 15.8z" fill="#fafafa" /><path d="M14.3 20.6 L18.3 14.6 L20.8 17.4z" fill="#4a1410" /><path d="M18.3 14.6 L19.2 13.8 L21.7 16.6 L20.8 17.4z" fill="#777" /></g>
<g transform="translate(1121.8 515.3)" clip-path="url(#cp1)"><rect width="36.5" height="36.5" fill="#d6d6d6"/><defs><linearGradient id="s41" x1="10" x2="36" y1="0" y2="0" gradientUnits="userSpaceOnUse"><stop offset="0" stop-color="#fff" stop-opacity=".9"/><stop offset="1" stop-color="#555"/></linearGradient></defs><path d="M12 26c1 4 4 4 7 2s4 2 7 1 6-3 11-4" fill="none" stroke="url(#s41)" stroke-width="2.600"/><path d="M18.7 14.6 L47.2 -10.5 L49.7 -7.7 L21.2 17.4z" fill="#ececec" /><path d="M19.3 15.2 L47.8 -9.9 L48.3 -9.2 L19.8 15.8z" fill="#fff" /><path d="M14.7 20.6 L18.7 14.6 L21.2 17.4z" fill="#6a3a1c" /><path d="M18.7 14.6 L19.6 13.8 L22.1 16.6 L21.2 17.4z" fill="#777" /><path d="M31.4 3.3 L43.4 -7.2 L46.0 -4.4 L34.0 6.2z" fill="#f29a1c" /></g>
<g transform="translate(972.6 552.7)" clip-path="url(#cp2)"><rect width="36.5" height="36.5" fill="#d6d6d6"/><path d="M9 32c4-2 8-6 11-6s-1 7 3 7 9-3 14-8" fill="none" stroke="#222" stroke-width="0.900"/><path d="M18.1 16.5 L48.1 -9.9 L49.6 -8.1 L19.6 18.3z" fill="#e8e8e8" /><path d="M18.4 16.9 L48.4 -9.5 L48.8 -9.1 L18.8 17.3z" fill="#fff" /><path d="M15.1 20.7 L18.1 16.5 L19.6 18.3z" fill="#5a1c14" /><path d="M25.5 9.8 L44.2 -6.7 L46.0 -4.7 L27.2 11.8z" fill="#ee7a1a" /></g>
<g transform="translate(1010.0 552.7)" clip-path="url(#cp2)"><rect width="36.5" height="36.5" fill="#d6d6d6"/><g stroke="#666" stroke-width="0.900" opacity=".8"><path d="M12.0 33.0l2.0 -3.0"/><path d="M13.7 32.8l2.1 -3.5"/><path d="M15.4 32.6l2.3 -4.0"/><path d="M17.1 32.4l2.5 -4.5"/><path d="M18.8 32.2l2.6 -5.0"/><path d="M20.5 32.0l2.8 -5.5"/><path d="M22.2 31.8l2.9 -6.0"/><path d="M23.9 31.6l3.0 -6.5"/><path d="M25.6 31.4l3.2 -7.0"/><path d="M27.3 31.2l3.3 -7.5"/><path d="M29.0 31.0l3.5 -8.0"/><path d="M30.7 30.8l3.6 -8.5"/><path d="M32.4 30.6l3.8 -9.0"/><path d="M34.1 30.4l4.0 -9.5"/><path d="M35.8 30.2l4.1 -10.0"/></g><circle cx="11" cy="26" r="1.600" fill="#111"/><path d="M10 27l3 5" stroke="#333" stroke-width="1.500"/><path d="M18.2 11.9 L44.5 -11.2 L51.0 -3.7 L24.8 19.4z" fill="#2a80cc" /><path d="M19.7 13.6 L45.9 -9.5 L47.4 -7.8 L21.2 15.3z" fill="#5aa6e6" /><path d="M14.0 22.3 L18.2 11.9 L24.8 19.4z" fill="#d2b090" /><path d="M14.0 22.3 L15.3 19.2 L17.2 21.4z" fill="#3a3a3a" /></g>
<g transform="translate(1047.2 552.7)" clip-path="url(#cp2)"><rect width="36.5" height="36.5" fill="#d6d6d6"/><g fill="none" stroke="#777" stroke-width="0.600"><path d="M4 26l10 5-9 1 14 2M14 36l5-6 1 5 4-6 1 5 4-6 1 5 4-8"/><path d="M20 27c4-4 8-4 12-2"/></g><path d="M18.0 13.2 L44.2 -9.9 L49.5 -3.9 L23.2 19.2z" fill="#2a7ccc" /><path d="M19.1 14.5 L45.4 -8.6 L46.6 -7.2 L20.3 15.9z" fill="#58a4e8" /><path d="M13.1 22.8 L18.0 13.2 L23.2 19.2z" fill="#f0d8c4" /><path d="M13.1 22.8 L14.6 19.9 L16.1 21.7z" fill="#2a2a2a" /></g>
<g transform="translate(1084.5 552.7)" clip-path="url(#cp2)"><rect width="36.5" height="36.5" fill="#d6d6d6"/><circle cx="10" cy="9.500" r="2.800" fill="none" stroke="#b0b0b0" stroke-width="0.500"/><path d="M11 26c-2 6 3 8 8 5s5 0 8-1 4-2 9-2" fill="none" stroke="#aaa" stroke-width="0.700"/><path d="M18.9 12.3 L45.1 -10.8 L50.8 -4.4 L24.5 18.7z" fill="#1458d8" /><path d="M20.1 13.7 L46.4 -9.4 L47.7 -7.9 L21.4 15.2z" fill="#3c80f0" /><path d="M14.2 22.1 L18.9 12.3 L24.5 18.7z" fill="#f2d6c0" /><path d="M14.2 22.1 L15.6 19.2 L17.3 21.1z" fill="#111" /></g>
<g transform="translate(1121.8 552.7)" clip-path="url(#cp2)"><rect width="36.5" height="36.5" fill="#d6d6d6"/><path d="M11 26c-3 5 2 8 8 5s4-5 7-3-1 5 3 5 5-2 8-3" fill="none" stroke="#333" stroke-width="0.800"/><path d="M19.4 12.0 L45.6 -11.1 L51.3 -4.7 L25.0 18.4z" fill="#303336" /><path d="M20.6 13.4 L46.9 -9.7 L48.2 -8.2 L21.9 14.9z" fill="#4a4d50" /><path d="M14.7 21.8 L19.4 12.0 L25.0 18.4z" fill="#f2d6c0" /><path d="M14.7 21.8 L16.1 18.9 L17.8 20.8z" fill="#111" /><path d="M21.5 9.9 L22.4 9.1 L28.3 15.7 L27.4 16.5z" fill="#c81818" /></g>
<g transform="translate(972.6 590.0)" clip-path="url(#cp3)"><rect width="36.5" height="6.3" fill="#d6d6d6"/><path d="M25.0 6.5 L31.0 0.0 L36.5 0.0 L36.5 4.0 L34.0 6.5z" fill="#e8b8a8" /></g>
<g transform="translate(1010.0 590.0)" clip-path="url(#cp3)"><rect width="36.5" height="6.3" fill="#d6d6d6"/><path d="M26.0 6.5 L32.0 0.0 L35.0 0.0 L29.0 6.5z" fill="#999" /><path d="M30.0 6.5 L36.0 0.0 L36.5 0.0 L36.5 2.0 L32.0 6.5z" fill="#ddd" /></g>
<g transform="translate(1047.2 590.0)" clip-path="url(#cp3)"><rect width="36.5" height="6.3" fill="#d6d6d6"/></g>
<g transform="translate(1084.5 590.0)" clip-path="url(#cp3)"><rect width="36.5" height="6.3" fill="#d6d6d6"/><path d="M24.0 6.5 L30.0 0.0 L36.5 0.0 L36.5 6.5z" fill="#3c7a3a" /></g>
<g transform="translate(1121.8 590.0)" clip-path="url(#cp3)"><rect width="36.5" height="6.3" fill="#d6d6d6"/><path d="M26.0 6.5 L32.0 0.0 L36.5 0.0 L36.5 6.5z" fill="#3a80c8" /></g>
</svg><!--BR-END-->
<div class="a" style="left:971.3px;top:597.6px;width:154.2px;height:17.6px;background:#3a3a3a;border-radius:2.5px"></div>
<span class="t" style="left:973.7px;top:600.81px;font-size:10.5px;letter-spacing:-0.956px;color:#868686;">Search</span>
<div class="a" style="left:1130px;top:600.9px;width:10.6px;height:10.2px;background:#3a3a3a"></div>
<span class="t" style="left:1144.8px;top:601.11px;font-size:10.5px;letter-spacing:-0.358px;color:#d6d6d6;">Filter in Tag</span>
<!--DOCK-END-->
<!-- ===== status bar ===== -->
<span class="t" style="left:23.6px;top:624.11px;font-size:10.5px;letter-spacing:0.322px;color:#d6d6d6;">b) Airbrush Soft</span>
<span class="t" style="left:273.6px;top:624.11px;font-size:10.5px;letter-spacing:0.208px;color:#d6d6d6;">RGB/Alpha (8-bit integer/channel)  sRGB-elle-V2-srgbtrc.icc</span>
<div class="a" style="left:824px;top:618.5px;width:123px;height:19.5px;border:1px solid #3f3f3f;border-radius:2px;background:#4b4b4b"></div>
<span class="t" style="left:827.3px;top:624.11px;font-size:10.5px;letter-spacing:0.074px;color:#d6d6d6;">2,480 <u>x</u> 3,508 (42.8 MiB)</span>
<span class="t" style="left:976.7px;top:624.11px;font-size:10.5px;letter-spacing:-0.335px;color:#d6d6d6;">0.00°</span>
<span class="t" style="left:1089.3px;top:624.11px;font-size:10.5px;letter-spacing:-0.195px;color:#d6d6d6;">23.6%</span>
<!--MI-START-->
<!-- title buttons -->
<svg width="1200" height="22" style="left:0;top:0" viewBox="0 0 1200 22">
<path d="M1147.2 9.2l4.400 4.400 4.400-4.400" fill="none" stroke="#fcfcfc" stroke-width="1.200"/>
<path d="M1170.400 6.600l4.200 4.200-4.200 4.200-4.200-4.200z" fill="none" stroke="#fcfcfc" stroke-width="1.200"/>
<path d="M1185.500 7.300l7.200 7.200M1192.700 7.300l-7.200 7.200" fill="none" stroke="#fcfcfc" stroke-width="1.300"/>
</svg>
<div class="a" style="left:0;top:39.500px;width:1200px;height:1px;background:#444"></div>
<!-- krita icons -->
<div class="a kr" style="left:4.300px;top:4.300px;width:13px;height:13px"><i></i><b></b></div>
<div class="a kr" style="left:55.500px;top:69px;width:11px;height:11px"><i></i><b></b></div>
<!-- doc tab close -->
<svg width="20" height="20" style="left:938px;top:66px" viewBox="938 66 20 20"><path d="M943.600 71.800l9.400 9.400M953 71.800l-9.400 9.400" fill="none" stroke="#e4e4e4" stroke-width="1.500"/></svg>
<!-- scroll arrows -->
<svg width="1200" height="560" style="left:0;top:80px" viewBox="0 80 1200 560">
<path d="M958.600 94l2.600-2.800 2.600 2.800z M958.600 599.400l2.600 2.800 2.600-2.800z M1191.400 484l2.600-2.800 2.600 2.800z M1191.400 590l2.600 2.800 2.600-2.800z" fill="#b0b0b0"/>
<path d="M52.400 608.400l-2.800 2.600 2.800 2.600z M949.600 608.400l2.800 2.600-2.800 2.600z" fill="#b0b0b0"/>
<!-- layers docker icons -->
<path d="M1167.200 263.600l2.700 2.900 2.700-2.900z M1112 465.400l2.700 2.900 2.700-2.900z" fill="#a8a8a8"/>
<path d="M1185.200 259.600h7.400l-2.800 4.400v5.600l-1.800-1v-4.600z" class="ic" stroke-width="1"/><path d="M1193 269.600l2.500 2.700 2.500-2.700z M1193 290.300l2.500 2.700 2.500-2.700z" fill="#a8a8a8"/>
<path d="M1185.400 283h7.400M1185.400 285.600h7.400M1185.400 288.200h7.400" class="ic bt" stroke-width="1.300"/>
<path d="M1170.200 284.400l2.500-2.600 2.500 2.600z" fill="#6a6a6a"/><path d="M1170.200 288l2.500 2.600 2.500-2.600z" fill="#9a9a9a"/>
<!-- eyes -->
<g id="eye"><path d="M974.200 305.400c1.400-5.400 7.600-5.400 9 0" fill="none" stroke="#d8d8d8" stroke-width="1.300"/><path d="M974.800 306.400c1.800 3.400 6 3.400 7.800 0" fill="none" stroke="#b0b0b0" stroke-width="0.900"/><circle cx="978.700" cy="304.400" r="2.300" fill="#e8e8e8"/><circle cx="978.700" cy="304" r="0.800" fill="#888"/></g>
<use href="#eye" y="17.200"/>
<path d="M989.800 305.400l1.800 2.800 3.200-5.400" fill="none" stroke="#e8e8e8" stroke-width="1.100"/>
<g fill="#444"><circle cx="990.400" cy="320" r=".5"/><circle cx="992.600" cy="320" r=".5"/><circle cx="994.800" cy="320" r=".5"/><circle cx="990.400" cy="322.200" r=".5"/><circle cx="992.600" cy="322.200" r=".5"/><circle cx="994.800" cy="322.200" r=".5"/><circle cx="990.400" cy="324.400" r=".5"/><circle cx="992.600" cy="324.400" r=".5"/><circle cx="994.800" cy="324.400" r=".5"/></g>
<path d="M1003 305.200c1.600-1.800 3-1.600 4.600 0s3.200 1.600 5 -.6" fill="none" stroke="#000" stroke-width="1.700" stroke-linecap="round"/>
<g id="lt"><path d="M1019.600 298.200h5.400v4.400l-1.800 2h-2" fill="none" stroke="#c4c4c4" stroke-width="0.800"/><path d="M1019.400 299.600l3 2.600" fill="none" stroke="#c4c4c4" stroke-width="0.800"/></g>
<use href="#lt" y="17.300"/>
<!-- lock/alpha/checker -->
<g opacity="0.450"><rect x="1165" y="304.600" width="7.600" height="4.400" fill="#dfe6ee"/><path d="M1166.600 304.600v-1.600a2.300 2.300 0 0 1 4.600-.6" fill="none" stroke="#dfe6ee" stroke-width="1.100"/></g>
<rect x="1165" y="321.400" width="7.600" height="4.900" rx=".5" fill="#ececec"/><path d="M1166.500 321.400v-1.600a2.300 2.300 0 0 1 4.600 0v1.600" fill="none" stroke="#ececec" stroke-width="1.200"/>
<defs><pattern id="ck3" width="4" height="4" patternUnits="userSpaceOnUse" x="1187.300" y="300.800"><rect width="4" height="4" fill="#7f9cb8"/><rect width="2" height="2" fill="#4f6f90"/><rect x="2" y="2" width="2" height="2" fill="#4f6f90"/></pattern>
<pattern id="ck4" width="4" height="4" patternUnits="userSpaceOnUse" x="1187.300" y="318"><rect width="4" height="4" fill="#5a5a5a"/><rect width="2" height="2" fill="#424242"/><rect x="2" y="2" width="2" height="2" fill="#424242"/></pattern></defs>
<rect x="1187.300" y="300.800" width="9.800" height="8.800" fill="url(#ck3)"/><rect x="1187.300" y="318" width="9.800" height="8.800" fill="url(#ck4)"/>
<!-- layer bottom buttons -->
<path d="M975.200 428.200h10.800M980.600 422.800v10.800" class="ic bt" stroke-width="1.300"/>
<path d="M992 426.600l2.500 2.800 2.500-2.800z M1081.400 426.600l2.500 2.800 2.500-2.800z" fill="#9a9a9a"/>
<path d="M1006.400 422.800h9.400v9.200h-9.400z" class="ic" stroke-width="1.100"/><path d="M1004 425.400v8.800h9" class="ic" stroke-width="1.100"/>
<path d="M1024.400 425.200l6 5.800 6-5.800" class="ic" stroke-width="1.300"/>
<path d="M1044 431l6-5.800 6 5.800" class="ic" stroke-width="1.300"/>
<path d="M1063.800 424.400h12M1063.800 428.400h12M1063.800 432.400h12" class="ic bt" stroke-width="1.200"/><path d="M1072.400 422.800v3.200M1067 426.800v3.200M1072.400 430.800v3.200" class="ic bt" stroke-width="1.600"/>
<path d="M1185.800 425.600h8.400l-.6 8.600h-7.200z" class="fi"/><path d="M1184.600 424h10.800" class="ic" stroke-width="1.200"/><path d="M1188 423.600v-1.200h4v1.200" class="ic" stroke-width="1"/>
<!-- brush presets header icons -->
<path d="M1128 460.600h7.200v10.600l-3.600-2.800-3.600 2.800z" class="ic" stroke-width="1.300"/>
<path d="M1158 470.400l2.300 2.500 2.300-2.500z" fill="#a0a0a0"/>
<path d="M1168.400 462.600h9.600M1168.400 466h9.600M1168.400 469.400h9.600" class="ic bt" stroke-width="1.400"/>
<rect x="1184.400" y="460.800" width="11.200" height="11.400" class="ic" stroke-width="1"/><path d="M1184.400 467.400h11.200" class="ic" stroke-width="1"/><path d="M1190 462.200v3" class="ic bt" stroke-width="1.400"/>
<path d="M1132.400 606.200l2 3 3.800-6.200" fill="none" stroke="#e4e4e4" stroke-width="1.200"/>
<!-- status icons -->
<rect x="4.300" y="623" width="9.600" height="9.800" fill="none" stroke="#bdbdbd" stroke-width="0.900"/><circle cx="9.100" cy="627.900" r="2.400" fill="none" stroke="#909090" stroke-width="0.800"/>
<circle cx="957.700" cy="628.800" r="9" fill="#2c2c2c"/><path d="M953.200 628.800h9" stroke="#e8e8e8" stroke-width="0.900"/><circle cx="953" cy="628.800" r="1.200" fill="#e8e8e8"/><circle cx="962.600" cy="628.800" r=".800" fill="#e8e8e8"/>
<rect x="1131" y="627.600" width="49" height="2" rx="1" fill="#3a3a3a"/><rect x="1131" y="627.600" width="9" height="2" rx="1" fill="#6b9bc8"/>
<rect x="1139.400" y="624" width="7.800" height="9" rx="1.200" fill="#4c4c4c" stroke="#5e5e5e" stroke-width="0.800"/>
<rect x="1185.600" y="624.200" width="10.600" height="7" class="ic" stroke-width="1"/><path d="M1190.900 631.200v2M1188.200 633.400h5.400" class="ic" stroke-width="1"/><path d="M1189.600 627h2.600M1190.900 625.800v2.400" class="ic" stroke-width="0.700"/>
</svg>
<!--MI-END-->
<!-- ===== taskbar ===== -->
<div class="a" style="left:0;top:640.7px;width:1200px;height:34.3px;background:#2a2e32"></div>
<!--TK-START-->
<div class="a" style="left:166.4px;top:640.7px;width:39.2px;height:34.3px;background:#43474c"></div>
<div class="a" style="left:166.4px;top:640.7px;width:39.2px;height:2.1px;background:#6e7175"></div>
<div class="a" style="left:288.2px;top:640.7px;width:38.9px;height:34.3px;background:#2f5d7e"></div>
<div class="a" style="left:288.2px;top:640.7px;width:38.9px;height:2.1px;background:#3daee9"></div>
<div class="a kr" style="left:296.7px;top:647.7px;width:21.3px;height:21.3px"><i></i><b></b></div>
<div class="a" style="left:303.8px;top:667.4px;width:7px;height:7px;border-radius:50%;background:#2ecc71"></div>
<svg width="1200" height="35" style="left:0;top:640px" viewBox="0 640 1200 35">
<defs>
 <linearGradient id="tbag" x1="0" y1="647" x2="0" y2="669" gradientUnits="userSpaceOnUse"><stop offset="0" stop-color="#21a4f5"/><stop offset="1" stop-color="#1a78d2"/></linearGradient>
 <linearGradient id="tvid" x1="0" y1="651" x2="0" y2="668" gradientUnits="userSpaceOnUse"><stop offset="0" stop-color="#d8201c"/><stop offset="1" stop-color="#f58a1e"/></linearGradient>
 <linearGradient id="tset" x1="0" y1="647" x2="0" y2="668" gradientUnits="userSpaceOnUse"><stop offset="0" stop-color="#33373c"/><stop offset="1" stop-color="#1e2124"/></linearGradient>
 <radialGradient id="tff" cx="186.200" cy="657.600" r="11.500" gradientUnits="userSpaceOnUse"><stop offset="0" stop-color="#5a35c8"/><stop offset=".38" stop-color="#8a3ad0"/><stop offset=".5" stop-color="#ff4a6a"/><stop offset=".75" stop-color="#ff7a1a"/><stop offset="1" stop-color="#ffc81e"/></radialGradient>
</defs>
<!-- kde launcher -->
<path d="M28 650.200l5.800 5.800-5.800 5.800" fill="none" stroke="#fcfcfc" stroke-width="2.600"/>
<circle cx="22.300" cy="650" r="1.400" fill="#fcfcfc"/><circle cx="19.300" cy="657.400" r="1.900" fill="#fcfcfc"/><circle cx="24.500" cy="664.900" r="2.500" fill="#fcfcfc"/>
<!-- settings -->
<rect x="53.800" y="647" width="21" height="21.300" rx="1.500" fill="url(#tset)"/>
<path d="M56.800 655.400h14.600M56.800 660.600h14.600" stroke="#4a4e53" stroke-width="1"/>
<path d="M56.800 655.400h11M56.800 660.600h5" stroke="#3daee9" stroke-width="1.100"/>
<circle cx="68.500" cy="655.400" r="1.700" fill="#fcfcfc"/><circle cx="62.300" cy="660.600" r="1.700" fill="#fcfcfc"/>
<!-- discover -->
<path d="M100.600 651.600a4.500 4.500 0 0 1 9 0" fill="none" stroke="#1d88dc" stroke-width="1"/>
<path d="M96.200 651.600h17.900l.600 17h-19.100z" fill="url(#tbag)"/>
<path d="M105.800 658.600l2.200 2.200-2.200 2.200" fill="none" stroke="#e8f4ff" stroke-width="1.100"/><circle cx="102.600" cy="659.400" r=".700" fill="#e8f4ff"/><circle cx="104" cy="664.400" r=".700" fill="#e8f4ff"/>
<!-- folder -->
<path d="M134.300 648.600h8l1.400 1.600h13.300v18.100h-22.700z" fill="#2e86c8"/>
<rect x="135.600" y="650.600" width="20" height="4.200" fill="#f4f8fb"/>
<path d="M134.300 668.300v-13.300h7l1.600-1.800h14.100v15.100z" fill="#3daee9"/>
<path d="M134.300 668.300v-6l22.700-4v10z" fill="#2f8fd0" opacity=".5"/>
<!-- firefox -->
<circle cx="186.200" cy="658.200" r="10.600" fill="url(#tff)"/>
<path d="M189.400 645.800c3.400 2 7 5.600 7.800 10.400.600-3.400-.600-6.800-2.800-8.600.100 1.100-.300 1.900-1 2.200-1-1.800-2.300-3.200-4-4z" fill="#ffd83a"/>
<path d="M176.800 652.600c0-1.800.800-3.600 2-4.600.200 1.400.900 2.400 2 3-1.600.300-3 .800-4 1.600z" fill="#ff9a1e"/>
<path d="M179.600 656.200c1.400-2.400 4.600-3.400 7.400-2.200-1.800.200-2.800 1.200-3 2.400 1.800-.400 3.800.600 4.200 2.400.400 2.200-1.400 4.200-3.800 4.200-3 0-5.400-2.600-4.800-6.800z" fill="#7a3ad8" opacity=".55"/>
<!-- konsole -->
<rect x="216.400" y="647.500" width="20.800" height="20.400" rx="1.500" fill="#3b3e42"/><path d="M216.400 660l20.800-8v15.900h-20.800z" fill="#303336" opacity=".6"/>
<path d="M224.200 653.200l4.600 4.600-4.600 4.600" fill="none" stroke="#f0f0f0" stroke-width="1.300"/>
<!-- video downloader -->
<rect x="256.600" y="650.900" width="21.700" height="17" fill="url(#tvid)"/>
<path d="M258.200 651v17M276.700 651v17" stroke="#fff" stroke-width="1.300" stroke-dasharray="1.500 1.500" opacity=".85"/>
<path d="M265.600 654.600h3.800v5.200h3l-4.900 5.400-4.900-5.400h3z" fill="#fff"/>
<!-- krita plus -->
<path d="M305.400 670.900h3.800M307.300 669v3.800" stroke="#fff" stroke-width="1"/>
<!-- tray: bell slash -->
<path d="M898.200 661.200c1.200-1.200 1.200-2.600 1.200-4.600a2.600 2.600 0 0 1 5.200 0c0 2 0 3.400 1.200 4.600z" fill="none" stroke="#dfe1e3" stroke-width="1.100"/><path d="M900.800 663.200a1.300 1.300 0 0 0 2.400 0" fill="none" stroke="#dfe1e3" stroke-width="1"/><path d="M896.200 652.200l11.400 12.800" stroke="#c0392b" stroke-width="1.200"/>
<!-- hp -->
<circle cx="924.600" cy="658.300" r="8.600" fill="#0a8fd8"/><circle cx="924.600" cy="658.300" r="8.200" fill="none" stroke="#bfe4f8" stroke-width=".6"/>
<path d="M921.600 652.400l-2.600 9.800M920.300 657.800c1.200-1.400 2.800-1.200 2.600.200l-1 4.200M925.200 656.800l-2.800 9M925.400 657.200c2-.800 3 .200 2.600 1.800-.400 1.800-1.800 3-3.600 2.600" fill="none" stroke="#fff" stroke-width="1.200"/>
<!-- clipboard -->
<rect x="943.400" y="653" width="9.800" height="11.800" rx="1" fill="#e4e6e8"/><rect x="945.800" y="651.800" width="5" height="2.600" fill="#e4e6e8" stroke="#2a2e32" stroke-width=".6"/><path d="M945.400 658h5.800M945.400 660.600h4" stroke="#2a2e32" stroke-width="1"/>
<!-- keyboard -->
<rect x="964.300" y="654" width="14.200" height="8.800" rx="1" fill="#4e7386" stroke="#9fb2bd" stroke-width=".8"/><path d="M966 656.400h10.800M966 658.600h10.800" stroke="#2f4a58" stroke-width="1" stroke-dasharray="1.400 .8"/><path d="M968 661h7" stroke="#2f4a58" stroke-width="1"/>
<!-- volume -->
<path d="M988.400 655.800h2.800l4-3.600v12.200l-4-3.600h-2.800z" fill="#eceff1"/><path d="M997 655a4.400 4.400 0 0 1 0 6.600M998.800 652.800a7.200 7.200 0 0 1 0 11" fill="none" stroke="#aeb4b9" stroke-width="1"/>
<!-- bluetooth -->
<path d="M1014.600 654.600l6.400 7-3.200 3.400v-13.400l3.200 3.400-6.400 7" fill="none" stroke="#eceff1" stroke-width="1.100"/><path d="M1009.600 658.300h3M1023.200 658.300h3" stroke="#eceff1" stroke-width="1.200" stroke-dasharray="1.200 1"/>
<!-- brightness -->
<circle cx="1042.200" cy="658.300" r="3.300" fill="#eceff1"/><path d="M1042.200 655a3.300 3.300 0 0 1 0 6.600z" fill="#2a2e32"/><circle cx="1042.200" cy="658.300" r="3.300" fill="none" stroke="#eceff1" stroke-width=".8"/>
<path d="M1042.200 652v1.800M1042.200 662.800v1.800M1036 658.300h1.800M1046.600 658.300h1.800M1037.800 653.900l1.300 1.300M1045.300 661.400l1.300 1.300M1037.800 662.700l1.300-1.300M1045.300 655.200l1.300-1.300" stroke="#eceff1" stroke-width="1.100"/>
<!-- wifi -->
<path d="M1057.800 656a10 10 0 0 1 14.400 0" fill="none" stroke="#7f868c" stroke-width="1.100"/><path d="M1060 658.600a7 7 0 0 1 10 0" fill="none" stroke="#c8ccd0" stroke-width="1.100"/><path d="M1062.200 661a4 4 0 0 1 5.600 0" fill="none" stroke="#eceff1" stroke-width="1.100"/><circle cx="1065" cy="663.200" r="1.100" fill="#eceff1"/>
<!-- chevron -->
<path d="M1080.400 661.400l6.300-6.600 6.300 6.600" fill="none" stroke="#eceff1" stroke-width="1.200"/>
<!-- show desktop -->
<rect x="1168.500" y="651.500" width="13" height="13" rx="1" fill="none" stroke="#c8ccd0" stroke-width="1"/><path d="M1168.500 662h13" stroke="#c8ccd0" stroke-width="1"/>
</svg>
<!--TK-END-->
<span class="t" style="left:1102.7px;top:646.65px;font-size:12.7px;letter-spacing:0.047px;color:#fcfcfc;">11:15 AM</span>
<span class="t" style="left:1108.0px;top:659.10px;font-size:10.4px;letter-spacing:0.164px;color:#fcfcfc;">12/26/24</span>
</body></html>
